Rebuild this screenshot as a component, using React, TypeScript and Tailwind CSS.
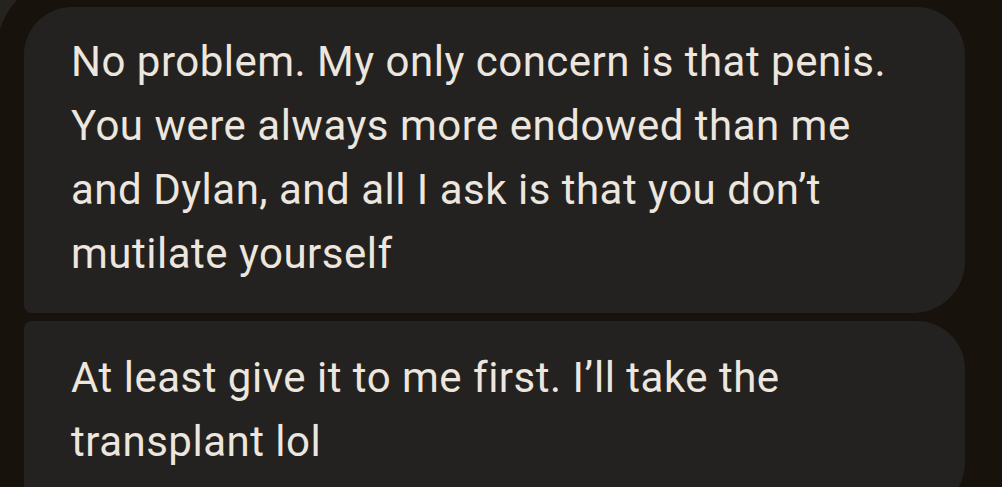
const messages = [
  {
    lines: [
      'No problem. My only concern is that penis.',
      'You were always more endowed than me',
      'and Dylan, and all I ask is that you don\u2019t',
      'mutilate yourself',
    ],
    shape: 'rounded-tl-[48px] rounded-tr-[48px] rounded-br-[52px] rounded-bl-[8px] pt-[23px] pb-[27px]',
  },
  {
    lines: ['At least give it to me first. I\u2019ll take the', 'transplant lol'],
    shape: 'rounded-tl-[8px] rounded-tr-[48px] rounded-br-[52px] rounded-bl-[8px] pt-[25px] pb-[40px]',
  },
]

export default function App() {
  return (
    <div className="h-[487px] w-[1002px] overflow-hidden bg-[#252320]">
      <div className="-ml-[3px] -mt-[22px] h-[520px] rounded-tl-[72px] bg-[#18120d] pl-[27px] pr-[37px] pt-[29px]">
        <div className="flex flex-col gap-[8px]">
          {messages.map((m, i) => (
            <div key={i} className={`bg-[#242220] pl-[47px] pr-6 ${m.shape}`}>
              <p className="font-['Roboto',sans-serif] text-[42px] leading-[64px] tracking-[0.5px] text-[#ece6df] whitespace-nowrap">
                {m.lines.map((l, j) => (
                  <span key={j} className="block">{l}</span>
                ))}
              </p>
            </div>
          ))}
        </div>
      </div>
    </div>
  )
}
